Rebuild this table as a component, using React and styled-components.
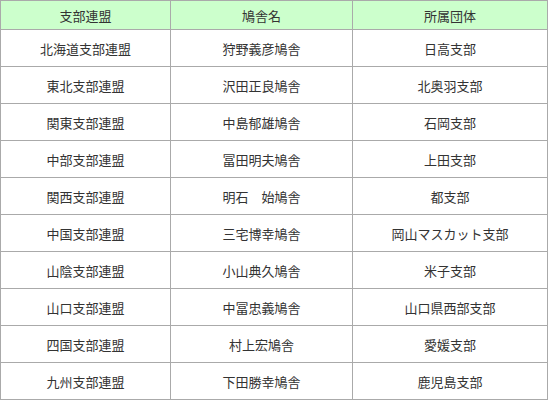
import React from "react";
import styled, { createGlobalStyle } from "styled-components";

const Global = createGlobalStyle`
  html, body { margin: 0; padding: 0; background: #fff; }
  body { font-family: "Noto Sans CJK JP", "Noto Sans", sans-serif; }
`;

const Table = styled.table`
  border-collapse: collapse;
  table-layout: fixed;
  width: 547px;
  color: #333;
  font-size: 13px;
`;

const Col = styled.col`
  width: ${(p) => p.$w}px;
`;

const Th = styled.th`
  background: #ccffcc;
  border: 1px solid #aaa;
  font-weight: normal;
  height: 28px;
  padding: 0;
  text-align: center;
  line-height: 1;
`;

const Td = styled.td`
  border: 1px solid #aaa;
  height: 36px;
  padding: 0;
  text-align: center;
  line-height: 1;
`;

const columns = [
  { title: "支部連盟", width: 170 },
  { title: "鳩舎名", width: 182 },
  { title: "所属団体", width: 195 },
];

const rows = [
  ["北海道支部連盟", "狩野義彦鳩舎", "日高支部"],
  ["東北支部連盟", "沢田正良鳩舎", "北奥羽支部"],
  ["関東支部連盟", "中島郁雄鳩舎", "石岡支部"],
  ["中部支部連盟", "冨田明夫鳩舎", "上田支部"],
  ["関西支部連盟", "明石　始鳩舎", "都支部"],
  ["中国支部連盟", "三宅博幸鳩舎", "岡山マスカット支部"],
  ["山陰支部連盟", "小山典久鳩舎", "米子支部"],
  ["山口支部連盟", "中冨忠義鳩舎", "山口県西部支部"],
  ["四国支部連盟", "村上宏鳩舎", "愛媛支部"],
  ["九州支部連盟", "下田勝幸鳩舎", "鹿児島支部"],
];

export default function App() {
  return (
    <>
      <Global />
      <Table>
        <colgroup>
          {columns.map((c) => (
            <Col key={c.title} $w={c.width} />
          ))}
        </colgroup>
        <thead>
          <tr>
            {columns.map((c) => (
              <Th key={c.title}>{c.title}</Th>
            ))}
          </tr>
        </thead>
        <tbody>
          {rows.map((r) => (
            <tr key={r[0]}>
              {r.map((c, i) => (
                <Td key={i}>{c}</Td>
              ))}
            </tr>
          ))}
        </tbody>
      </Table>
    </>
  );
}
